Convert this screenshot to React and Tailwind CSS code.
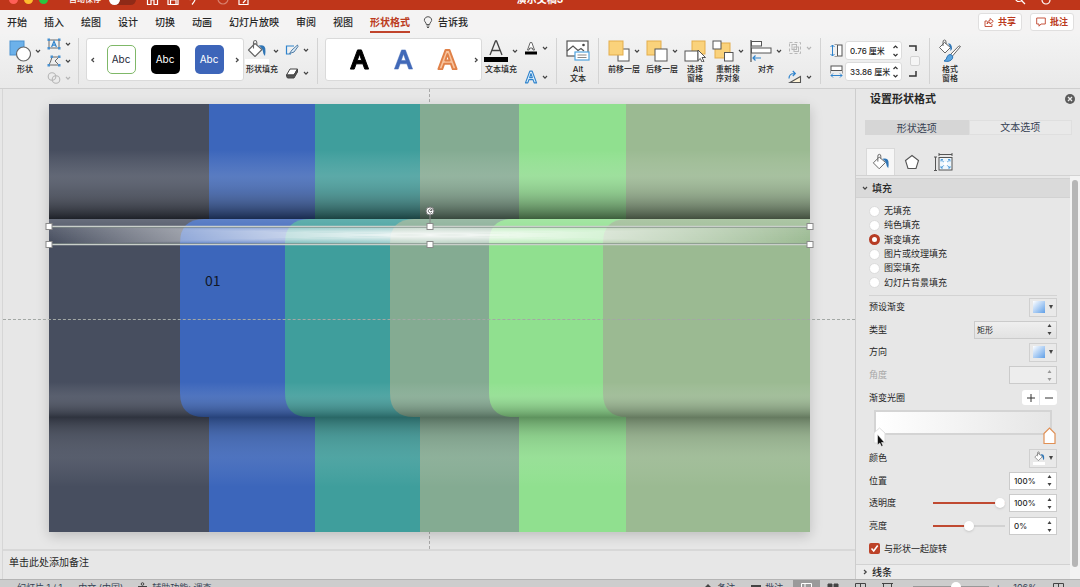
import { useState } from 'react'

const tabs = ['开始', '插入', '绘图', '设计', '切换', '动画', '幻灯片放映', '审阅', '视图', '形状格式']

const fills = ['无填充', '纯色填充', '渐变填充', '图片或纹理填充', '图案填充', '幻灯片背景填充']

const colors = ['#474e5f', '#3c66bb', '#3f9e9c', '#84ab92', '#90e08f', '#9bba92']
const stripX = [0, 160, 266, 371, 470, 577]
const cardX = [0, 131, 236, 341, 440, 554]

function Chevron({ muted }) {
  return (
    <svg width="6" height="6" viewBox="0 0 6 6" fill="none" stroke={muted ? '#b5b5b5' : '#444'} strokeWidth="1.2" className="shrink-0">
      <path d="M1 2 L3 4.2 L5 2" />
    </svg>
  )
}

function Separator() {
  return <div className="w-px h-[46px] bg-[#d3d3d3] shrink-0" />
}

function BigButton({ label, second, chevron, className, children }) {
  return (
    <button className={`flex flex-col items-center shrink-0 ${className}`}>
      <span className="h-[26px] flex items-center justify-center gap-1">
        {children}
        {chevron && <Chevron />}
      </span>
      <span className="mt-px text-[8px] leading-[9px] font-medium whitespace-nowrap">
        {label}
        {second && <br />}
        {second}
      </span>
    </button>
  )
}

function SmallButton({ label, muted, children }) {
  return (
    <button aria-label={label} className="flex items-center gap-1">
      {children}
      <Chevron muted={muted} />
    </button>
  )
}

function Bucket({ size = 20 }) {
  return (
    <svg width={size} height={size} viewBox="0 0 20 20" fill="none" className="shrink-0">
      <path d="M8 4.500 L15 10.500 L8 17.500 L1.500 11 Z" fill="#fff" stroke="#666" strokeWidth="1.100" strokeLinejoin="round" />
      <path d="M6.500 9.500 V3.500 Q6.500 1.500 8.200 1.500 Q9.800 1.500 9.800 3.500 V6" stroke="#666" strokeWidth="1.100" />
      <path d="M11.500 6.500 Q17.500 5 18.300 9.500 Q18.800 13 18 17 Q16 15 15.800 12 Q15.500 9 11.500 6.500 Z" fill="#2f75b5" />
    </svg>
  )
}

function ShapesIcon() {
  return (
    <svg width="22" height="22" viewBox="0 0 22 22">
      <rect x="1" y="1" width="14" height="14" fill="#6cb1ea" stroke="#4a91cf" />
      <circle cx="14.500" cy="14" r="7" fill="#fff" stroke="#666" strokeWidth="1.200" />
    </svg>
  )
}

function TextBoxIcon() {
  return (
    <svg width="14" height="12" viewBox="0 0 14 12" fill="none">
      <rect x="2" y="2" width="10" height="8" stroke="#6a6a6a" />
      <path d="M4.600 9 L7 3.200 L9.400 9 M5.500 7.200 H8.500" stroke="#2f83cc" strokeWidth="1.200" />
      <path d="M.500 .500h2.500v2.500h-2.500z M11 .500h2.500v2.500h-2.500z M.500 9h2.500v2.500h-2.500z M11 9h2.500v2.500h-2.500z" fill="#4a91cf" />
    </svg>
  )
}

function EditPointsIcon() {
  return (
    <svg width="14" height="12" viewBox="0 0 14 12" fill="none">
      <path d="M5 2 H12 L8 6 L12 10 H2 Q4 6 5 2" stroke="#6a6a6a" />
      <path d="M3.500 .500h2.500v2.500h-2.500z M11 .500h2.500v2.500h-2.500z M.500 9h2.500v2.500h-2.500z M11 9h2.500v2.500h-2.500z" fill="#4a91cf" />
    </svg>
  )
}

function MergeIcon() {
  return (
    <svg width="14" height="12" viewBox="0 0 14 12" fill="none" stroke="#b5b5b5" strokeWidth="1.100">
      <circle cx="5" cy="4.500" r="3.800" />
      <circle cx="9" cy="7.500" r="3.800" />
    </svg>
  )
}

function OutlineIcon() {
  return (
    <svg width="14" height="12" viewBox="0 0 14 12" fill="none">
      <path d="M9 2 H1.500 V10 H6" stroke="#2f83cc" strokeWidth="1.200" />
      <path d="M12.500 1 L7 6 L4.500 9.500 L9 8 L13 2.500 Z" fill="#dcecf8" stroke="#3f6f9c" strokeWidth=".900" />
    </svg>
  )
}

function EffectsIcon() {
  return (
    <svg width="14" height="12" viewBox="0 0 14 12">
      <path d="M5 2 H12.500 L9 8 H1.500 Z" fill="#fff" stroke="#444" />
      <path d="M1.500 8 H9 L12.500 2 V5 L9 11 H2.500 Q1.500 10 1.500 8" fill="#555" stroke="#444" />
    </svg>
  )
}

function LetterIcon({ size, stroke, fill = 'none', width = 1 }) {
  return (
    <svg width={size} height={size} viewBox="0 0 24 24" strokeLinejoin="round">
      <path d="M2.500 22 L10 2 H14 L21.500 22 H17.500 L15.500 16.500 H8.500 L6.500 22 Z M9.700 13 H14.300 L12 6.300 Z" fill={fill} fillRule="evenodd" stroke={stroke} strokeWidth={width} />
    </svg>
  )
}

function TextFillIcon() {
  return (
    <svg width="24" height="24" viewBox="0 0 24 24" fill="none">
      <path d="M6 16 L11.500 2 H12.500 L18 16 M8 11.500 H16" stroke="#444" strokeWidth="1.300" />
      <rect x="0" y="18" width="24" height="5" fill="#000" />
    </svg>
  )
}

function TextOutlineIcon() {
  return (
    <svg width="14" height="14" viewBox="0 0 14 14" fill="none">
      <path d="M3.500 9 L6.200 1.500 H7.800 L10.500 9 H9 L8.300 7 H5.700 L5 9 Z" fill="#fff" stroke="#555" strokeWidth=".900" />
      <rect x="1" y="10.500" width="12" height="3" fill="#000" />
    </svg>
  )
}

function AltIcon() {
  return (
    <svg width="24" height="22" viewBox="0 0 24 22" fill="none">
      <rect x="1" y="1" width="21" height="15" fill="#fff" stroke="#555" strokeWidth="1.200" />
      <path d="M1 11 L7 6 L12 10.500 L15 8.500 L18 11" stroke="#555" strokeWidth="1.200" />
      <circle cx="17.500" cy="5" r="1.300" fill="#444" />
      <rect x="9" y="12" width="14" height="8" fill="#fff" stroke="#4fa3e0" strokeWidth="1.200" />
      <path d="M11.500 15 H20.500 M11.500 17.500 H20.500" stroke="#888" />
    </svg>
  )
}

function LayerIcon({ kind }) {
  return (
    <svg width="22" height="22" viewBox="0 0 22 22">
      {kind === 'front' && (
        <>
          <rect x="10" y="9" width="11" height="12" fill="#fff" stroke="#555" />
          <rect x="1" y="1" width="14" height="14" fill="#fad27b" stroke="#e3ad4c" />
        </>
      )}
      {kind === 'back' && (
        <>
          <rect x="1" y="1" width="14" height="14" fill="#fad27b" stroke="#e3ad4c" />
          <rect x="9" y="9" width="12" height="12" fill="#fff" stroke="#555" />
        </>
      )}
      {kind === 'select' && (
        <>
          <rect x="8" y="1" width="13" height="13" fill="#fad27b" stroke="#e3ad4c" />
          <rect x="1" y="11" width="13" height="10" fill="#fff" stroke="#555" />
          <path d="M14 10 L21.500 17.500 H18 L20 21.500 L18 22 L16.300 18.500 L14 20.500 Z" fill="#fff" stroke="#444" strokeWidth=".900" />
        </>
      )}
      {kind === 'order' && (
        <>
          <rect x="3" y="3" width="15" height="15" fill="#fad27b" stroke="#e3ad4c" />
          <rect x="1" y="1" width="8" height="8" fill="#fff" stroke="#555" />
          <rect x="12.500" y="12.500" width="8.500" height="8.500" fill="#fff" stroke="#555" />
        </>
      )}
    </svg>
  )
}

function AlignIcon() {
  return (
    <svg width="22" height="22" viewBox="0 0 22 22" fill="none">
      <path d="M1 0 V22" stroke="#555" strokeWidth="1.200" />
      <rect x="1.500" y="1.500" width="10" height="4.500" fill="#fff" stroke="#555" />
      <rect x="1.500" y="8" width="19.500" height="5" fill="#fff" stroke="#555" />
      <path d="M3 18 H11 M5.500 15.500 L3 18 L5.500 20.500" stroke="#2f83cc" strokeWidth="1.200" />
    </svg>
  )
}

function GroupIcon() {
  return (
    <svg width="14" height="14" viewBox="0 0 14 14" fill="none" stroke="#b9b9b9">
      <rect x="1.500" y="1.500" width="11" height="11" strokeDasharray="3 2" />
      <rect x="4" y="3.500" width="4.500" height="5" />
      <rect x="6" y="6" width="4.500" height="4.500" />
    </svg>
  )
}

function RotateIcon() {
  return (
    <svg width="14" height="14" viewBox="0 0 14 14" fill="none">
      <path d="M2 12.500 H12.500 V6.500 Z" fill="#fff4d8" stroke="#555" strokeWidth="1.100" />
      <path d="M1 8.500 Q1 3.500 6.500 3.500 M4.800 1 L7.300 3.500 L4.800 6" stroke="#2f83cc" strokeWidth="1.200" />
    </svg>
  )
}

function SizeIcon({ wide }) {
  return (
    <svg width="13" height="13" viewBox="0 0 13 13" fill="none">
      <g transform={wide ? 'matrix(0 1 1 0 0 0) translate(13 0) scale(-1 1)' : undefined}>
        <path d="M2.500 1 V12 M.500 3 L2.500 1 L4.500 3 M.500 10 L2.500 12 L4.500 10" stroke="#2f83cc" />
        <rect x="7.500" y="1" width="4.500" height="11" fill="#fff" stroke="#555" />
        <path d="M4.500 .500 H7 M4.500 12.500 H7" stroke="#888" strokeWidth=".800" />
      </g>
    </svg>
  )
}

function FormatIcon() {
  return (
    <svg width="24" height="24" viewBox="0 0 24 24" fill="none">
      <path d="M6.500 3.500 L12.500 8.500 L7 14 L1.500 8.500 Z" fill="#fff" stroke="#666" />
      <path d="M5 7 V3 Q5 1 6.500 1 Q8 1 8 3 V5" stroke="#666" />
      <path d="M10 4.500 Q14 4 14 10 L12.500 12 Q12.500 7 10 4.500" fill="#2f75b5" />
      <path d="M22.500 7.500 L14.500 17 L12.500 15.500 L21 6.800 Z" fill="#fff" stroke="#666" />
      <path d="M12 15.500 Q15.500 16 14.500 19.500 Q12 23.500 6 22 Q9 20.500 9 18 Q10 15.500 12 15.500" fill="#5aa5e0" stroke="#2f75b5" />
    </svg>
  )
}

function TitleBar() {
  return (
    <header className="h-[10px] shrink-0 overflow-hidden bg-[#bf361a] text-white flex items-end">
      <div className="flex-1 h-[22px] grid grid-cols-3 text-[10px] leading-[22px]">
        <div className="flex items-center pl-[9px]">
          <span className="flex gap-1.5 w-[60px] shrink-0">
            <i className="size-[9px] rounded-full bg-[#ff5f57]" />
            <i className="size-[9px] rounded-full bg-[#febc2e]" />
            <i className="size-[9px] rounded-full bg-[#28c840]" />
          </span>
          <span className="text-[8px] font-medium">自动保存</span>
          <span className="ml-2 w-[27px] h-[11px] rounded-full bg-[#8f2a17] shrink-0">
            <i className="block size-[11px] rounded-full bg-white" />
          </span>
          <svg className="ml-2.5 shrink-0" width="106" height="14" viewBox="0 0 106 14" fill="none" stroke="#fff" strokeWidth="1.200">
            <path d="M1.500 5 L6.500 1 L11.500 5 V12.500 H8 V8 H5 V12.500 H1.500 Z" />
            <path d="M22 2 H32 V12.500 H22 Z M24.500 12 V8 H30 V12" />
            <path d="M42 5 H48 Q51 7 46 12.500 M44.500 2 L42 5 L44.500 8" />
            <circle cx="77" cy="7" r="5" stroke="#d9806e" />
            <path d="M93 2 H102 V12.500 H93 Z M97 11 L103 4" />
          </svg>
        </div>
        <div className="text-center font-bold">演示文稿3</div>
        <div className="flex items-center justify-end gap-3.5 pr-7">
          <svg width="12" height="12" viewBox="0 0 12 12" fill="none" stroke="#fff" strokeWidth="1.200">
            <circle cx="5" cy="5" r="3.500" />
            <path d="M7.500 7.500 L11 11" />
          </svg>
          <svg width="12" height="12" viewBox="0 0 12 12" fill="none" stroke="#fff" strokeWidth="1.200">
            <circle cx="6" cy="7" r="4" />
          </svg>
        </div>
      </div>
    </header>
  )
}

function TabRow() {
  return (
    <nav className="h-6 shrink-0 flex items-center justify-between bg-[#f4f3f3] pl-[7px] pr-[6px]">
      <div className="flex items-center gap-[17px] text-[10px] leading-[14px] font-medium">
        {tabs.map((tab) => (
          <button
            key={tab}
            className={tab === '形状格式' ? 'pt-1 pb-0.5 border-b-2 border-[#c0432b] text-[#bb3a20] font-bold' : ''}
          >
            {tab}
          </button>
        ))}
        <button className="flex items-center gap-[5px] -ml-1">
          <svg width="10" height="12" viewBox="0 0 10 12" fill="none" stroke="#555" strokeWidth="1">
            <path d="M3.300 8.500 Q3.300 7 2 5.800 Q1 4.500 1.500 3 Q2.500 .700 5 .700 Q7.500 .700 8.500 3 Q9 4.500 8 5.800 Q6.700 7 6.700 8.500 Z M3.500 10 H6.500 M4 11.500 H6" />
          </svg>
          告诉我
        </button>
      </div>
      <div className="flex gap-2 text-[9px] font-bold text-[#bb3a20]">
        <button className="h-[18px] px-[5px] flex items-center gap-1 bg-white border border-[#e0dfdf] rounded-[3px]">
          <svg width="10" height="10" viewBox="0 0 10 10" fill="none" stroke="#c0432b" strokeWidth=".900">
            <path d="M3 4 H1 V9.500 H8 V7 M3 7 Q3 3.500 6 3.500 V1.500 L9.300 4.300 L6 7 V5.200 Q4 5.200 3 7" />
          </svg>
          共享
        </button>
        <button className="h-[18px] px-[5px] flex items-center gap-1 bg-white border border-[#e0dfdf] rounded-[3px]">
          <svg width="10" height="10" viewBox="0 0 10 10" fill="none" stroke="#c0432b" strokeWidth=".900">
            <path d="M.700 1 H9.300 V7 H5 L3 9.200 V7 H.700 Z" />
          </svg>
          批注
        </button>
      </div>
    </nav>
  )
}

function SizeInput({ label, value, wide }) {
  return (
    <label className="flex items-center gap-0.5">
      <SizeIcon wide={wide} />
      <span className="w-[57px] h-[19px] flex items-center bg-white border border-[#dcdcdc] rounded-[3px] pl-1 pr-0.5">
        <input aria-label={label} defaultValue={value} className="min-w-0 flex-1 text-[8px] font-medium outline-none bg-transparent" />
        <svg width="7" height="14" viewBox="0 0 7 14" fill="none" stroke="#333" strokeWidth="1.200">
          <path d="M1.500 4 L3.500 2 L5.500 4 M1.500 10 L3.500 12 L5.500 10" />
        </svg>
      </span>
    </label>
  )
}

function Ribbon() {
  return (
    <div className="h-[55px] shrink-0 flex items-start pt-1 pl-[9px] bg-gradient-to-b from-[#f3f3f3] to-[#e9e9e9] border-b border-[#cfcfcf]">
      <BigButton label="形状" chevron className="w-8"><ShapesIcon /></BigButton>
      <div className="ml-[6px] h-[46px] flex flex-col justify-between shrink-0">
        <SmallButton label="文本框"><TextBoxIcon /></SmallButton>
        <SmallButton label="编辑形状"><EditPointsIcon /></SmallButton>
        <SmallButton label="合并形状" muted><MergeIcon /></SmallButton>
      </div>
      <div className="ml-[7px]"><Separator /></div>

      {/* shape styles */}
      <div className="ml-[7px] w-[158px] h-[43px] shrink-0 flex items-center justify-between bg-white border border-[#dadada] rounded-[3px] px-[3px]">
        <button aria-label="上一个样式" className="rotate-90"><Chevron /></button>
        <div className="flex gap-[15px] text-[10px] text-white">
          <button className="size-[29px] rounded-[5px] border border-[#7fb868] text-gray-800">Abc</button>
          <button className="size-[29px] rounded-[5px] bg-black">Abc</button>
          <button className="size-[29px] rounded-[5px] bg-[#3d65b9]">Abc</button>
        </div>
        <button aria-label="下一个样式" className="-rotate-90"><Chevron /></button>
      </div>
      <BigButton label="形状填充" chevron className="ml-px w-[34px]">
        <span className="flex flex-col items-center">
          <Bucket />
          <i className="w-6 h-[5px] bg-white" />
        </span>
      </BigButton>
      <div className="ml-[6px] h-[46px] flex flex-col justify-around shrink-0">
        <SmallButton label="形状轮廓"><OutlineIcon /></SmallButton>
        <SmallButton label="形状效果"><EffectsIcon /></SmallButton>
      </div>
      <div className="ml-[8px]"><Separator /></div>

      {/* wordart styles */}
      <div className="ml-[7px] w-[157px] h-[43px] shrink-0 flex items-center justify-end gap-[14px] bg-white border border-[#dadada] rounded-[3px] pr-0.5">
        <div className="flex gap-[21px]">
          <button aria-label="黑色艺术字"><LetterIcon size={23} stroke="#000" fill="#000" /></button>
          <button aria-label="蓝色艺术字"><LetterIcon size={23} stroke="#4169b8" fill="#4169b8" width={.5} /></button>
          <button aria-label="橙色艺术字"><LetterIcon size={23} stroke="#e08148" fill="#f8c39d" width={2} /></button>
        </div>
        <button aria-label="下一个艺术字" className="-rotate-90"><Chevron /></button>
      </div>
      <BigButton label="文本填充" chevron className="ml-0.5 w-[34px]"><TextFillIcon /></BigButton>
      <div className="ml-[6px] h-[46px] flex flex-col justify-between pt-[3px] shrink-0">
        <SmallButton label="文本轮廓"><TextOutlineIcon /></SmallButton>
        <SmallButton label="文本效果"><LetterIcon size={14} stroke="#2f83cc" fill="#dff0fc" width={2} /></SmallButton>
      </div>
      <div className="ml-[8px]"><Separator /></div>
      <BigButton label="Alt" second="文本" className="ml-[9px] w-6"><AltIcon /></BigButton>
      <div className="ml-[8px]"><Separator /></div>

      {/* arrange */}
      <BigButton label="前移一层" chevron className="ml-[8px] w-[34px]"><LayerIcon kind="front" /></BigButton>
      <BigButton label="后移一层" chevron className="ml-1 w-[34px]"><LayerIcon kind="back" /></BigButton>
      <BigButton label="选择" second="窗格" className="ml-1 w-6"><LayerIcon kind="select" /></BigButton>
      <BigButton label="重新排" second="序对象" chevron className="ml-1 w-[34px]"><LayerIcon kind="order" /></BigButton>
      <BigButton label="对齐" chevron className="ml-1 w-[34px]"><AlignIcon /></BigButton>
      <div className="ml-[5px] h-[46px] flex flex-col justify-between pt-[3px] shrink-0">
        <SmallButton label="组合" muted><GroupIcon /></SmallButton>
        <SmallButton label="旋转"><RotateIcon /></SmallButton>
      </div>
      <div className="ml-[8px]"><Separator /></div>

      {/* size */}
      <div className="ml-[9px] pt-[3px] flex items-center gap-1 shrink-0">
        <div className="flex flex-col gap-0.5">
          <SizeInput label="高度" value="0.76 厘米" />
          <SizeInput label="宽度" value="33.86 厘米" wide />
        </div>
        <div className="flex flex-col items-center gap-1">
          <svg width="8" height="8" viewBox="0 0 8 8" fill="none" stroke="#333" strokeWidth="1.500"><path d="M0 2 H7 V7" /></svg>
          <input type="checkbox" aria-label="锁定纵横比" className="appearance-none size-[10px] ml-1 bg-[#f5f5f5] border border-[#d3d3d3] rounded-[2px]" />
          <svg width="8" height="8" viewBox="0 0 8 8" fill="none" stroke="#333" strokeWidth="1.500"><path d="M0 6 H7 V1" /></svg>
        </div>
      </div>
      <div className="ml-[9px]"><Separator /></div>
      <BigButton label="格式" second="窗格" className="ml-[8px] w-6"><FormatIcon /></BigButton>
    </div>
  )
}

function Slide() {
  const handles = [0, 381, 761]
  return (
    <svg viewBox="0 0 761 428" className="relative w-full h-auto overflow-visible shadow-[0_4px_12px_rgba(0,0,0,0.18)]">
      <defs>
        <linearGradient id="foldTop" x1="0" y1="0" x2="0" y2="1">
          <stop offset="0" stopColor="#fff" stopOpacity="0" />
          <stop offset=".380" stopColor="#ddd" stopOpacity=".180" />
          <stop offset=".600" stopColor="#888" stopOpacity=".260" />
          <stop offset="1" stopColor="#000" stopOpacity=".580" />
        </linearGradient>
        <linearGradient id="foldLight" x1="0" y1="0" x2="0" y2="1">
          <stop offset="0" stopColor="#fff" stopOpacity=".180" />
          <stop offset="1" stopColor="#fff" stopOpacity="0" />
        </linearGradient>
        <linearGradient id="foldMid" x1="0" y1="0" x2="0" y2="1">
          <stop offset="0" stopColor="#fff" stopOpacity="0" />
          <stop offset=".400" stopColor="#ddd" stopOpacity=".120" />
          <stop offset="1" stopColor="#000" stopOpacity=".330" />
        </linearGradient>
        <linearGradient id="foldBottom" x1="0" y1="0" x2="0" y2="1">
          <stop offset="0" stopColor="#000" stopOpacity=".350" />
          <stop offset=".280" stopColor="#777" stopOpacity=".180" />
          <stop offset=".580" stopColor="#ddd" stopOpacity=".110" />
          <stop offset="1" stopColor="#fff" stopOpacity="0" />
        </linearGradient>
        <linearGradient id="glowBase">
          <stop offset="0" stopColor="#fff" stopOpacity="0" />
          <stop offset=".500" stopColor="#fff" stopOpacity=".450" />
          <stop offset="1" stopColor="#fff" stopOpacity="0" />
        </linearGradient>
        <linearGradient id="glowX">
          <stop offset="0" stopColor="#fff" stopOpacity="0" />
          <stop offset=".500" stopColor="#fff" stopOpacity=".900" />
          <stop offset="1" stopColor="#fff" stopOpacity="0" />
        </linearGradient>
        <linearGradient id="glowY" x1="0" y1="0" x2="0" y2="1">
          <stop offset="0" stopColor="#fff" stopOpacity="0" />
          <stop offset=".500" stopColor="#fff" stopOpacity=".900" />
          <stop offset="1" stopColor="#fff" stopOpacity="0" />
        </linearGradient>
      </defs>

      {stripX.map((x, i) => (
        <rect key={x} x={x} y="0" width={761 - x} height="428" fill={colors[i]} />
      ))}
      <rect x="0" y="46" width="761" height="69" fill="url(#foldTop)" />
      <rect x="0" y="313" width="761" height="70" fill="url(#foldBottom)" />

      {/* folded cards */}
      {cardX.map((x, i) => (
        <path
          key={x}
          d={x === 0 ? 'M0 115 H761 V313 H0 Z' : `M${x + 24} 115 H761 V313 H${x + 24} Q${x} 313 ${x} 289 V139 Q${x} 115 ${x + 24} 115 Z`}
          fill={colors[i]}
        />
      ))}
      <rect x="0" y="115" width="761" height="24" fill="url(#foldLight)" />
      <rect x="0" y="278" width="761" height="35" fill="url(#foldMid)" />

      {/* highlight bar, fades from its centre to all four sides */}
      <rect x="0" y="122" width="761" height="18" fill="url(#glowBase)" />
      <path d="M0 122 L381 131 L761 122 V140 L381 131 L0 140 Z" fill="url(#glowX)" />
      <path d="M0 122 H761 L381 131 L761 140 H0 L381 131 Z" fill="url(#glowY)" />

      <text x="156" y="182" fontSize="14" fill="#111827" className="font-['Noto_Sans_CJK_SC',sans-serif]">01</text>

      {/* selection frame */}
      <path d="M0 122.500 H761 M0 140.500 H761" stroke="#c9cfca" strokeWidth="1.500" />
      <path d="M0 123.500 H761 M0 139.500 H761" stroke="#6c7a74" strokeWidth=".500" />
      <path d="M381 107 V122" stroke="#888" />
      <circle cx="381" cy="107" r="4" fill="#fff" stroke="#777" />
      <path d="M383 106 A2 2 0 1 0 383 108 M383 104.500 V106.500 H381" fill="none" stroke="#555" strokeWidth=".800" />
      {handles.map((x) => (
        <g key={x} fill="#fff" stroke="#8a8a8a">
          <rect x={x - 3} y="119.500" width="6" height="6" />
          <rect x={x - 3} y="137.500" width="6" height="6" />
        </g>
      ))}
    </svg>
  )
}

function Stepper({ muted }) {
  return (
    <svg width="5" height="11" viewBox="0 0 5 11" fill={muted ? '#999' : '#444'} className="shrink-0">
      <path d="M2.500 0 L4.500 3 H.500 Z M.500 8 H4.500 L2.500 11 Z" />
    </svg>
  )
}

function Row({ label, id, muted, children }) {
  return (
    <div className="flex items-center justify-between">
      <label htmlFor={id} className={muted ? 'text-[#a8a8a8]' : ''}>{label}</label>
      <div className="flex items-center gap-1">{children}</div>
    </div>
  )
}

function NumberBox({ id, value, disabled }) {
  return (
    <span className={`w-12 h-[18px] flex items-center border border-[#cbcbcb] px-1 ${disabled ? 'bg-[#ededed]' : 'bg-white'}`}>
      <input id={id} defaultValue={value} disabled={disabled} className="min-w-0 flex-1 text-[8px] font-medium outline-none bg-transparent" />
      <Stepper muted={disabled} />
    </span>
  )
}

function SwatchButton({ id, children }) {
  return (
    <button id={id} className="w-7 h-[19px] flex items-center justify-end gap-1 pr-[3px] border border-[#d0d0d0] bg-[#e9e9e9]">
      {children}
      <svg width="4" height="4" viewBox="0 0 4 4" fill="#444"><path d="M0 0 H4 L2 4 Z" /></svg>
    </button>
  )
}

const rangeStyle = "appearance-none w-[72px] h-[10px] bg-transparent [&::-webkit-slider-runnable-track]:h-0.5 [&::-webkit-slider-thumb]:appearance-none [&::-webkit-slider-thumb]:size-[10px] [&::-webkit-slider-thumb]:-mt-1 [&::-webkit-slider-thumb]:rounded-full [&::-webkit-slider-thumb]:bg-white [&::-webkit-slider-thumb]:shadow"

function FormatPanel() {
  const [fill, setFill] = useState('渐变填充')

  return (
    <aside className="w-[225px] shrink-0 flex flex-col overflow-hidden bg-[#e7e7e7] border-l border-[#cdcdcd] text-[9px] leading-[14px]">
      <div className="h-5 shrink-0 flex items-center justify-between pl-[14px] pr-1">
        <h2 className="text-[11px] font-bold">设置形状格式</h2>
        <button aria-label="关闭">
          <svg width="12" height="12" viewBox="0 0 12 12" stroke="#eee" strokeWidth="1.300">
            <circle cx="6" cy="6" r="5" fill="#5c5c5c" stroke="none" />
            <path d="M4 4 L8 8 M8 4 L4 8" />
          </svg>
        </button>
      </div>
      <div className="mt-[11px] h-[15px] ml-[9px] mr-2 shrink-0 grid grid-cols-2 text-[10px] text-gray-700">
        <button className="bg-[#d6d6d6]">形状选项</button>
        <button className="bg-[#e9e9e9] border border-[#dfdfdf] leading-[13px]">文本选项</button>
      </div>
      <div className="mt-[13px] h-7 shrink-0 flex pl-[10px] border-b border-[#d2d2d2]">
        <button aria-label="填充与线条" className="w-[29px] flex items-center justify-center bg-[#f6f6f6] border-x border-t border-[#d9d9d9]">
          <Bucket size={18} />
        </button>
        <button aria-label="效果" className="w-[34px] flex items-center justify-center">
          <svg width="16" height="16" viewBox="0 0 16 16" fill="#fff" stroke="#555" strokeWidth="1.100">
            <path d="M8 1.500 L14.500 6.500 L12 14.500 H4 L1.500 6.500 Z" />
          </svg>
        </button>
        <button aria-label="大小与属性" className="w-[29px] flex items-center justify-center">
          <svg width="19" height="18" viewBox="0 0 19 18" fill="none" stroke="#555">
            <path d="M5 1.500 H18 M5 0 V3 M18 0 V3 M1.500 4 V17 M0 4 H3 M0 17.500 H3" />
            <rect x="5" y="4.500" width="13" height="12.500" fill="#eef7fd" />
            <path d="M7 6.500 L16 15 M16 6.500 L7 15 M7 8.500 V6.500 H9 M14 6.500 H16 V8.500 M7 13 V15 H9 M14 15 H16 V13" stroke="#4a98d8" strokeWidth=".900" />
            <rect x="9.500" y="9" width="4" height="3.500" fill="#fff" stroke="none" />
          </svg>
        </button>
      </div>

      <div className="flex-1 min-h-0 flex">
        <div className="flex-1 pt-0.5">
          <h3>
            <button className="w-full h-5 flex items-center gap-1 pl-[6px] bg-[#dadada] border-y border-[#d2d2d2] text-[10px] font-medium">
              <Chevron /> 填充
            </button>
          </h3>
          <div className="px-[13px]">
            <div className="mt-1.5 h-[86px] grid auto-rows-fr">
              {fills.map((name) => (
                <label key={name} className="flex items-center gap-1">
                  <input
                    type="radio"
                    name="fill"
                    checked={fill === name}
                    onChange={() => setFill(name)}
                    className="appearance-none size-[11px] rounded-full bg-white border border-[#dcdcdc] checked:border-[3px] checked:border-[#b63c24]"
                  />
                  {name}
                </label>
              ))}
            </div>

            <div className="mt-[5px] border-t border-[#d3d3d3] h-[114px] grid auto-rows-fr">
              <Row label="预设渐变" id="preset">
                <SwatchButton id="preset"><i className="size-3 bg-gradient-to-br from-white to-[#5f9fe6]" /></SwatchButton>
              </Row>
              <Row label="类型" id="type">
                <span className="w-[83px] h-[18px] flex items-center border border-[#cbcbcb] bg-gradient-to-b from-[#efefef] to-[#e2e2e2] pr-1">
                  <select id="type" className="appearance-none flex-1 pl-0.5 text-[8px] outline-none bg-transparent">
                    <option>矩形</option>
                  </select>
                  <Stepper />
                </span>
              </Row>
              <Row label="方向" id="direction">
                <SwatchButton id="direction"><i className="size-3 bg-gradient-to-br from-white to-[#5f9fe6]" /></SwatchButton>
              </Row>
              <Row label="角度" id="angle" muted>
                <NumberBox id="angle" value="" disabled />
              </Row>
              <Row label="渐变光圈">
                <span className="w-[35px] h-[15px] flex bg-white rounded-[3px] divide-x divide-gray-200">
                  <button aria-label="添加光圈" className="flex-1 flex items-center justify-center">
                    <svg width="8" height="8" viewBox="0 0 8 8" stroke="#333"><path d="M0 4 H8 M4 0 V8" /></svg>
                  </button>
                  <button aria-label="删除光圈" className="flex-1 flex items-center justify-center">
                    <svg width="8" height="8" viewBox="0 0 8 8" stroke="#333"><path d="M0 4 H8" /></svg>
                  </button>
                </span>
              </Row>
            </div>

            <div className="relative mt-px ml-[5px] mr-[5px] h-[25px] border-2 border-[#d4d4d4] bg-gradient-to-r from-white to-[#e6e6e6]">
              <button aria-label="光圈 1" className="absolute -left-[3px] top-[15px]">
                <svg width="14" height="22" viewBox="0 0 14 22">
                  <path d="M1 6 L6.500 1 L12 6 V16 H1 Z" fill="#fff" stroke="#ddd" />
                  <path d="M4.500 7.500 V18 L6.800 16 L8.500 19.500 L10 18.800 L8.500 15.500 H11.500 Z" fill="#111" stroke="#fff" strokeWidth=".500" />
                </svg>
              </button>
              <button aria-label="光圈 2" className="absolute -right-[6px] top-[15px]">
                <svg width="13" height="18" viewBox="0 0 13 18">
                  <path d="M1 6.500 L6.500 1 L12 6.500 V16.500 H1 Z" fill="#fff" stroke="#e09055" strokeWidth="1.200" />
                </svg>
              </button>
            </div>

            <div className="mt-3 h-[113px] grid auto-rows-fr">
              <Row label="颜色" id="color">
                <SwatchButton id="color">
                  <span className="flex flex-col items-center">
                    <Bucket size={11} />
                    <i className="w-3 h-[3px] bg-white" />
                  </span>
                </SwatchButton>
              </Row>
              <Row label="位置" id="position"><NumberBox id="position" value="100%" /></Row>
              <Row label="透明度" id="opacity">
                <input type="range" aria-label="透明度滑块" defaultValue="100" className={`${rangeStyle} [&::-webkit-slider-runnable-track]:bg-[#c04a32]`} />
                <NumberBox id="opacity" value="100%" />
              </Row>
              <Row label="亮度" id="brightness">
                <input type="range" aria-label="亮度滑块" defaultValue="50" className={`${rangeStyle} [&::-webkit-slider-runnable-track]:bg-[linear-gradient(to_right,#c04a32_50%,#d2d2d2_50%)]`} />
                <NumberBox id="brightness" value="0%" />
              </Row>
              <label className="flex items-center gap-1">
                <span className="grid">
                  <input type="checkbox" defaultChecked className="appearance-none size-[11px] rounded-[2px] bg-[#bd4329] [grid-area:1/1]" />
                  <svg width="11" height="11" viewBox="0 0 11 11" fill="none" stroke="#fff" strokeWidth="1.600" className="[grid-area:1/1] pointer-events-none">
                    <path d="M2.500 5.500 L4.700 8 L8.700 2.500" />
                  </svg>
                </span>
                与形状一起旋转
              </label>
            </div>
          </div>
          <h3 className="mt-1">
            <button className="w-full h-5 flex items-start gap-1 pl-[6px] bg-[#ececec] border-t border-[#d2d2d2] text-[10px] font-medium">
              <span className="-rotate-90 mt-1"><Chevron /></span> 线条
            </button>
          </h3>
        </div>
        <div className="w-[10px] px-0.5 pt-1 pb-3 bg-[#f3f3f3]">
          <div className="h-full rounded-full bg-[#b6b6b6]" />
        </div>
      </div>
    </aside>
  )
}

function StatusBar() {
  return (
    <footer className="h-2 shrink-0 overflow-hidden bg-[#cdcdcd] border-t border-[#b4b4b4]">
      <div className="h-4 flex items-start text-[9px] leading-[15px] text-gray-700">
        <span className="ml-[17px]">幻灯片 1 / 1</span>
        <span className="ml-4">中文 (中国)</span>
        <button className="ml-3.5 flex items-center gap-1">
          <svg width="11" height="11" viewBox="0 0 11 11" fill="none" stroke="#444">
            <circle cx="5.500" cy="2" r="1.300" />
            <path d="M1 4.500 H10 M4 5 V7 L3 10.500 M7 5 V7 L8 10.500" />
          </svg>
          辅助功能: 调查
        </button>
        <div className="ml-auto flex items-start">
          <button className="flex items-center gap-1">
            <svg width="10" height="10" viewBox="0 0 10 10" fill="#444"><path d="M5 1 L8 4 H2 Z M0 5 H10 V6 H0 Z" /></svg>
            备注
          </button>
          <button className="ml-4 flex items-center gap-1">
            <svg width="10" height="10" viewBox="0 0 10 10" fill="#444"><path d="M0 2 H10 V8 H0 Z" /></svg>
            批注
          </button>
          <svg className="ml-2.5" width="108" height="14" viewBox="0 0 108 14" fill="none" stroke="#444">
            <rect x="0" y="0" width="27" height="14" fill="#9a9a9a" stroke="none" />
            <path d="M8.500 3.500 H18.500 V12 H8.500 Z M12 3.500 V12" stroke="#fff" />
            <path d="M35 4 H39 V8 H35 Z M41 4 H45 V8 H41 Z" fill="#444" />
            <path d="M62.500 3.500 H72.500 V12 H62.500 Z M67.500 3.500 V12 M89 3.500 H100 M90.500 3.500 V10 H98.500 V3.500" />
          </svg>
          <span className="leading-[13px]">−</span>
          <input type="range" aria-label="缩放" defaultValue="57" className="mx-1.5 mt-px appearance-none w-[76px] h-[11px] bg-transparent [&::-webkit-slider-runnable-track]:h-0.5 [&::-webkit-slider-runnable-track]:bg-[#999] [&::-webkit-slider-thumb]:appearance-none [&::-webkit-slider-thumb]:size-[10px] [&::-webkit-slider-thumb]:-mt-1 [&::-webkit-slider-thumb]:rounded-full [&::-webkit-slider-thumb]:bg-white" />
          <span className="leading-[13px]">+</span>
          <span className="ml-3">106%</span>
          <svg className="ml-4 mr-4" width="11" height="12" viewBox="0 0 11 12" fill="none" stroke="#444">
            <path d="M.500 3.500 H10.500 V11 H.500 Z M5.500 3 V9" />
          </svg>
        </div>
      </div>
    </footer>
  )
}

export default function App() {
  return (
    <div className="h-screen flex flex-col overflow-hidden bg-[#e7e7e7] text-[#262626] font-['Inter','Noto_Sans_CJK_SC',sans-serif]">
      <TitleBar />
      <TabRow />
      <Ribbon />
      <div className="flex-1 min-h-0 flex">
        <main className="flex-1 min-w-0 flex flex-col ml-0.5 border-l border-[#d6d6d6]">
          <div className="relative flex-1 min-h-0 flex items-center pl-[46px] pr-[45px] pb-0.5">
            <div className="absolute left-1/2 inset-y-0 border-l border-dashed border-[#a9a9a9]" />
            <Slide />
            <div className="absolute top-1/2 inset-x-0 border-t border-dashed border-[#a3a8a5]" />
          </div>
          <div className="h-[30px] shrink-0 flex items-center pl-[6px] pb-1.5 border-t-2 border-[#d8d8d8] text-[10px]">
            单击此处添加备注
          </div>
        </main>
        <FormatPanel />
      </div>
      <StatusBar />
    </div>
  )
}
